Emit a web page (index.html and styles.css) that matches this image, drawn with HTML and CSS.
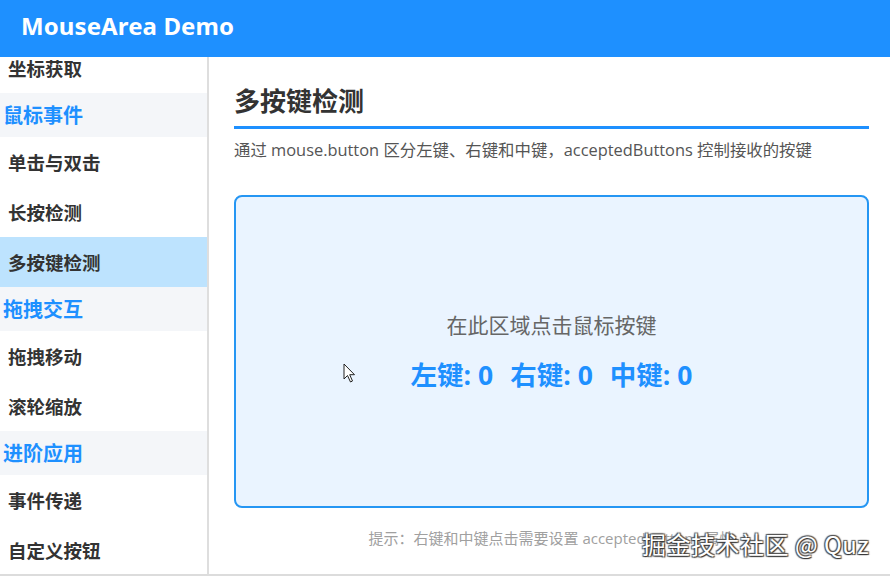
FILE: index.html
```html
<!DOCTYPE html>
<html lang="zh">
<head>
<meta charset="utf-8">
<title>MouseArea Demo</title>
<link rel="stylesheet" href="styles.css">
</head>
<body>
<div class="app">
  <header class="topbar"><span class="app-title">MouseArea Demo</span></header>
  <div class="body">
    <nav class="sidebar">
      <ul class="nav-list">
        <li class="nav-item">坐标获取</li>
        <li class="nav-group">鼠标事件</li>
        <li class="nav-item">单击与双击</li>
        <li class="nav-item">长按检测</li>
        <li class="nav-item active">多按键检测</li>
        <li class="nav-group">拖拽交互</li>
        <li class="nav-item">拖拽移动</li>
        <li class="nav-item">滚轮缩放</li>
        <li class="nav-group">进阶应用</li>
        <li class="nav-item">事件传递</li>
        <li class="nav-item">自定义按钮</li>
      </ul>
    </nav>
    <main class="content">
      <h1 class="page-title">多按键检测</h1>
      <p class="page-desc">通过 mouse.button 区分左键、右键和中键，acceptedButtons 控制接收的按键</p>
      <section class="click-area">
        <p class="area-hint">在此区域点击鼠标按键</p>
        <p class="counts"><span>左键: 0</span><span>右键: 0</span><span>中键: 0</span></p>
        <svg class="cursor" width="14" height="21" viewBox="0 0 14 21"><path d="M1 1 L1 16 L4.5 12.5 L7.5 19 L9.5 18 L6.7 11.7 L11.5 11.7 Z" fill="#fff" stroke="#222" stroke-width="1" stroke-linejoin="round"/></svg>
      </section>
      <p class="tip">提示：右键和中键点击需要设置 acceptedButtons 属性</p>
    </main>
  </div>
  <div class="watermark">掘金技术社区 @ Quz</div>
</div>
</body>
</html>
```
FILE: styles.css
```css
* { box-sizing: border-box; }
html, body { margin: 0; padding: 0; }
body {
  width: 890px;
  height: 576px;
  overflow: hidden;
  background: #fff;
  font-family: "Open Sans", "Noto Sans CJK SC", sans-serif;
  color: #333;
}
.app { position: relative; width: 890px; height: 576px; display: flex; flex-direction: column; }
.topbar {
  height: 57px;
  background: #1e90ff;
  display: flex;
  align-items: center;
  padding: 0 0 6px 21px;
  flex: none;
}
.app-title {
  color: #fff;
  font-family: "Noto Sans", "Noto Sans CJK SC", sans-serif;
  font-weight: 700;
  font-size: 24px;
  letter-spacing: 0.1px;
}
.body {
  flex: 1;
  display: flex;
  border-bottom: 2px solid #dcdcdc;
  min-height: 0;
}
.sidebar {
  width: 209px;
  flex: none;
  border-right: 2px solid #dedede;
  overflow: hidden;
}
.nav-list { list-style: none; margin: -14px 0 0; padding: 0; }
.nav-item {
  height: 50px;
  display: flex;
  align-items: center;
  padding: 0 0 1px 8px;
  font-family: "Noto Sans CJK SC", sans-serif;
  font-weight: 700;
  font-size: 18.5px;
  color: #333;
}
.nav-item.active { background: #bde3fe; }
.nav-group {
  height: 44px;
  display: flex;
  align-items: center;
  padding: 0 0 1px 3px;
  background: #f4f6f9;
  font-family: "Noto Sans CJK SC", sans-serif;
  font-weight: 700;
  font-size: 20px;
  color: #1e90ff;
}
.content {
  flex: 1;
  padding: 0 21px 0 25px;
  display: flex;
  flex-direction: column;
}
.page-title {
  display: flex;
  align-items: flex-end;
  margin: 0;
  padding: 0 0 8px;
  height: 72px;
  border-bottom: 3px solid #1e90ff;
  font-family: "Noto Sans CJK SC", sans-serif;
  font-weight: 700;
  font-size: 26px;
  color: #333;
}
.page-desc {
  margin: 0;
  padding-top: 10px;
  font-size: 16.4px;
  color: #555;
  line-height: 22px;
  white-space: nowrap;
}
.click-area {
  position: relative;
  margin-top: 34px;
  height: 313px;
  border: 2px solid #2596f3;
  border-radius: 8px;
  background: #eaf4ff;
  display: flex;
  flex-direction: column;
  align-items: center;
  justify-content: center;
  padding-top: 0;
}
.area-hint {
  margin: 0;
  font-size: 21px;
  color: #666;
  line-height: 28px;
}
.counts {
  margin: 18px 0 0;
  display: flex;
  gap: 17px;
  font-size: 26.5px;
  font-weight: 700;
  color: #1e90ff;
  line-height: 36px;
}
.cursor { position: absolute; left: 107px; top: 166px; }
.tip {
  margin: 19px 0 0;
  text-align: center;
  font-size: 15px;
  color: #a0a0a0;
  line-height: 22px;
  white-space: nowrap;
}
.watermark {
  position: absolute;
  left: 642px;
  top: 526px;
  font-family: "Noto Sans CJK SC", sans-serif;
  font-size: 24px;
  color: #fff;
  letter-spacing: 0.5px;
  text-shadow: 1px 1px 1px #333, -1px -1px 1px #555, 1px -1px 1px #555, -1px 1px 1px #555;
}
```
